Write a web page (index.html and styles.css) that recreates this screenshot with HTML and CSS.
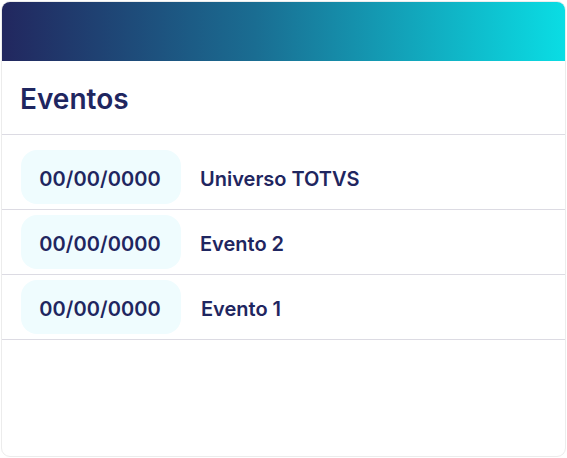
FILE: index.html
```html
<!DOCTYPE html>
<html>
<head>
<meta charset="utf-8">
<link rel="stylesheet" href="styles.css">
</head>
<body>
<div class="card">
  <div class="banner"></div>
  <h2 class="title">Eventos</h2>
  <ul class="list">
    <li class="row first"><span class="date">00/00/0000</span><span class="name">Universo TOTVS</span></li>
    <li class="row"><span class="date">00/00/0000</span><span class="name">Evento 2</span></li>
    <li class="row"><span class="date">00/00/0000</span><span class="name n1">Evento 1</span></li>
  </ul>
</div>
</body>
</html>
```
FILE: styles.css
```css
* { box-sizing: border-box; }
html, body { margin: 0; padding: 0; background: #fff; }
body { padding: 1px; font-family: Inter, "Noto Sans", sans-serif; color: #1f2660; }
.card {
  width: 565px;
  height: 456px;
  border: 1px solid #ececec;
  border-radius: 9px;
  overflow: hidden;
  background: #fff;
}
.banner {
  height: 59px;
  background: linear-gradient(90deg, #22275f 0%, #1a6d92 45%, #0adde4 100%);
}
.title {
  margin: 0;
  height: 74px;
  display: flex;
  align-items: center;
  padding: 3px 0 0 18px;
  font-size: 28px;
  font-weight: 600;
  border-bottom: 1px solid #dcdbe3;
}
.list { list-style: none; margin: 0; padding: 9px 0 0; }
.row {
  display: flex;
  align-items: center;
  gap: 19px;
  padding: 5px 19px 5px;
  border-bottom: 1px solid #dcdbe3;
}
.row.first { padding-top: 6px; }
.date {
  display: flex;
  align-items: center;
  justify-content: center;
  width: 160px;
  height: 54px;
  padding: 3px 2px 0 0;
  border-radius: 16px;
  background: #effcfe;
  font-size: 20px;
  letter-spacing: 0.1px;
  font-weight: 600;
}
.name { font-size: 20px; font-weight: 600; padding-top: 3px; }
.n1 { margin-left: 1px; }
```
